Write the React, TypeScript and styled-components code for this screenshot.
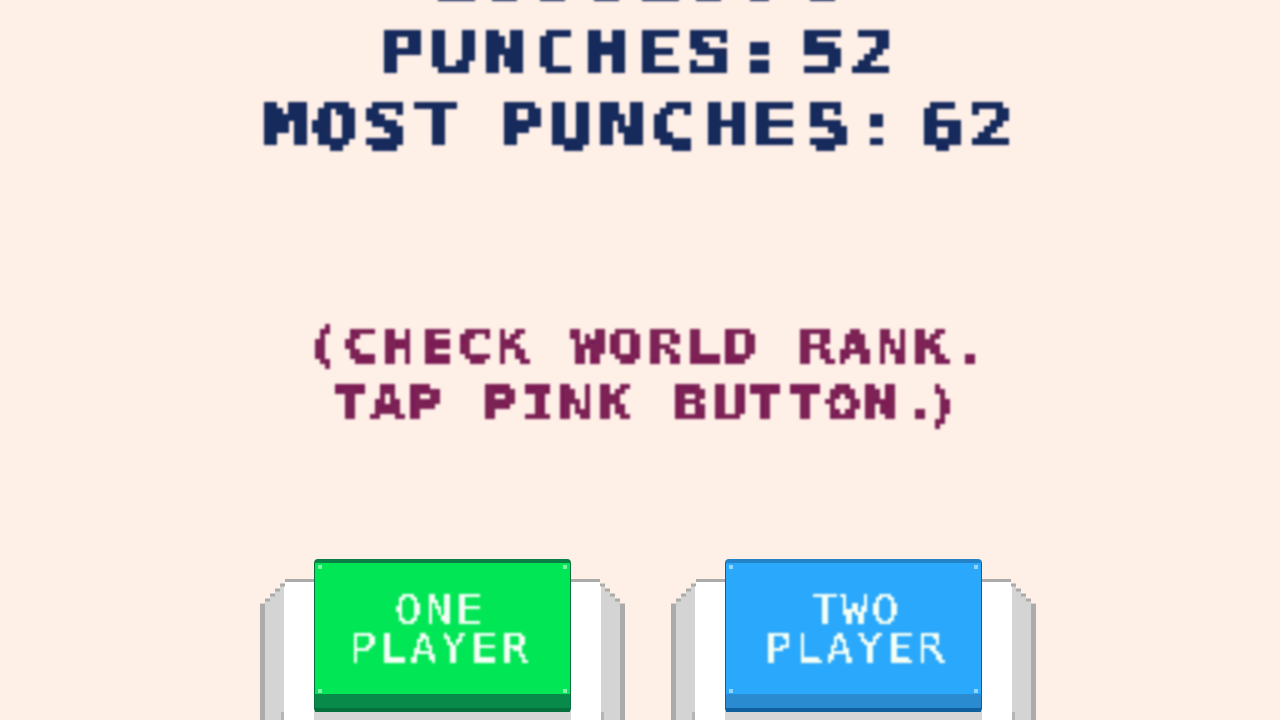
import styled, { createGlobalStyle } from "styled-components";

const GlobalStyle = createGlobalStyle`
  html, body {
    margin: 0;
    padding: 0;
    background: #fff0e7;
  }
`;

const Screen = styled.div`
  width: 1280px;
  height: 720px;
  overflow: hidden;
  display: flex;
  flex-direction: column;
  align-items: center;
  background: #fff0e7;
  font-family: "DejaVu Sans Mono", "Liberation Mono", monospace;
`;

const FilterDefs = styled.svg`
  position: absolute;
  width: 0;
  height: 0;
`;

const Pixelated = styled.div<{ $filter: string }>`
  filter: url(#${(props) => props.$filter});
`;

const Stats = styled.div`
  margin-top: -60px;
  padding-left: 1px;
  color: #182b5c;
  font-size: 60px;
  font-weight: bold;
  line-height: 74.5px;
  letter-spacing: 4.8px;
  text-align: center;
  white-space: pre;
  transform: scaleX(1.25);
  -webkit-text-stroke: 1.2px #182b5c;
`;

const Narrow = styled.span<{ $spacing: number }>`
  letter-spacing: ${(props) => props.$spacing}px;
`;

const Hint = styled.div`
  margin-top: 153px;
  padding-left: 12px;
  color: #7c2055;
  font-size: 46px;
  font-weight: bold;
  line-height: 58px;
  letter-spacing: 2.7px;
  text-align: center;
  white-space: pre;
  transform: scaleX(1.25);
  -webkit-text-stroke: 0.8px #7c2055;
`;

const Controls = styled.div`
  margin-top: 126px;
  display: flex;
  gap: 46px;
  margin-left: 16px;
`;

const Console = styled.div`
  position: relative;
  width: 365px;
  height: 200px;
  display: flex;
  justify-content: center;
`;

const Frame = styled.div`
  position: absolute;
  top: 20px;
  left: 0;
  right: 0;
  bottom: 0;
  padding: 3px 5px 0;
  background: #ababab;
  clip-path: polygon(
    25px 0, calc(100% - 25px) 0, calc(100% - 25px) 5px, calc(100% - 20px) 5px,
    calc(100% - 20px) 10px, calc(100% - 15px) 10px, calc(100% - 15px) 15px,
    calc(100% - 10px) 15px, calc(100% - 10px) 20px, calc(100% - 5px) 20px,
    calc(100% - 5px) 25px, 100% 25px, 100% 100%, 0 100%, 0 25px, 5px 25px,
    5px 20px, 10px 20px, 10px 15px, 15px 15px, 15px 10px, 20px 10px, 20px 5px,
    25px 5px
  );
`;

const Face = styled.div`
  height: 100%;
  padding: 0 19px;
  background: #d4d4d4;
  clip-path: polygon(
    20px 0, calc(100% - 20px) 0, calc(100% - 20px) 5px, calc(100% - 15px) 5px,
    calc(100% - 15px) 10px, calc(100% - 10px) 10px, calc(100% - 10px) 15px,
    calc(100% - 5px) 15px, calc(100% - 5px) 20px, 100% 20px, 100% 100%, 0 100%,
    0 20px, 5px 20px, 5px 15px, 10px 15px, 10px 10px, 15px 10px, 15px 5px,
    20px 5px
  );
`;

const Panel = styled.div`
  height: 100%;
  background: #ffffff;
`;

const Well = styled.div`
  position: absolute;
  top: 148px;
  left: 54px;
  width: 257px;
  height: 60px;
  background: #d6d6d6;
`;

const Tick = styled.span<{ $side: "left" | "right" }>`
  position: absolute;
  top: 153px;
  ${(props) => props.$side}: 21px;
  width: 3px;
  height: 10px;
  background: #b5b5b5;
`;

const Button = styled.div<{ $face: string; $band: string; $rim: string; $edge: string }>`
  position: relative;
  box-sizing: border-box;
  width: 257px;
  height: 153px;
  padding-top: 28px;
  background: ${(props) => props.$face};
  border: solid ${(props) => props.$edge};
  border-width: 4px 1px 0;
  border-top-color: ${(props) => props.$rim};
  border-radius: 4px;
  color: #f4fff6;

  &::after {
    content: "";
    position: absolute;
    left: 0;
    right: 0;
    bottom: 0;
    height: 18px;
    box-sizing: border-box;
    border-bottom: 4px solid ${(props) => props.$edge};
    background: ${(props) => props.$band};
  }
`;

const Label = styled.div<{ $shift: number }>`
  font-size: 40px;
  line-height: 38.5px;
  letter-spacing: 3px;
  padding-left: ${(props) => Math.max(props.$shift, 0)}px;
  padding-right: ${(props) => Math.max(-props.$shift, 0)}px;
  text-align: center;
  white-space: pre;
  transform: scaleX(1.12);
`;

const Stud = styled.span<{ $x: "left" | "right"; $y: "top" | "bottom" }>`
  position: absolute;
  width: 4px;
  height: 4px;
  background: rgba(255, 255, 255, 0.5);
  ${(props) => props.$x}: 3px;
  ${(props) => props.$y}: ${(props) => (props.$y === "top" ? 2 : 19)}px;
`;

const Studs = () => (
  <>
    <Stud $x="left" $y="top" />
    <Stud $x="right" $y="top" />
    <Stud $x="left" $y="bottom" />
    <Stud $x="right" $y="bottom" />
  </>
);

// samples the text on a coarse grid, so real text gets the blocky game look
const PixelFilter = ({ id, cell }: { id: string; cell: number }) => {
  const half = Math.floor(cell / 2);
  return (
    <filter id={id} x="-5%" y="-5%" width="110%" height="110%">
      <feFlood x={half} y={half} width="1" height="1" />
      <feComposite width={cell} height={cell} />
      <feTile result="grid" />
      <feComposite in="SourceGraphic" in2="grid" operator="in" />
      <feComponentTransfer>
        <feFuncA type="discrete" tableValues="0 1" />
      </feComponentTransfer>
      <feMorphology operator="dilate" radius={half} />
      <feGaussianBlur stdDeviation="0.8" />
    </filter>
  );
};

const players = [
  {
    label: "ONE\nPLAYER",
    shift: -4,
    face: "#00e655",
    band: "#078a4a",
    rim: "#087f45",
    edge: "#06703c",
  },
  {
    label: "TWO\nPLAYER",
    shift: 5,
    face: "#2aa8fb",
    band: "#2a8bd0",
    rim: "#2483c7",
    edge: "#0f5f9c",
  },
];

export default function App() {
  return (
    <Screen>
      <GlobalStyle />
      <FilterDefs aria-hidden="true">
        <PixelFilter id="pixel-large" cell={6} />
        <PixelFilter id="pixel-medium" cell={5} />
        <PixelFilter id="pixel-small" cell={3} />
      </FilterDefs>
      <Pixelated $filter="pixel-large">
        <Stats>
          {"LOSSES"}
          <Narrow $spacing={-11}>{": "}</Narrow>
          {"0\nPUNCHES"}
          <Narrow $spacing={-11}>{": "}</Narrow>
          {"52\nMOST"}
          <Narrow $spacing={-11}>{" "}</Narrow>
          {"PUNCHES"}
          <Narrow $spacing={-11}>{": "}</Narrow>
          {"62"}
        </Stats>
      </Pixelated>
      <Pixelated $filter="pixel-medium">
        <Hint>
          {"(CHECK WORLD RANK.\nTAP PINK BUTTON"}
          <Narrow $spacing={-9}>{"."}</Narrow>
          {")"}
        </Hint>
      </Pixelated>
      <Controls>
        {players.map((player) => (
          <Console key={player.label}>
            <Frame>
              <Face>
                <Panel />
              </Face>
            </Frame>
            <Well />
            <Tick $side="left" />
            <Tick $side="right" />
            <Button
              $face={player.face}
              $band={player.band}
              $rim={player.rim}
              $edge={player.edge}
            >
              <Pixelated $filter="pixel-small">
                <Label $shift={player.shift}>{player.label}</Label>
              </Pixelated>
              <Studs />
            </Button>
          </Console>
        ))}
      </Controls>
    </Screen>
  );
}
